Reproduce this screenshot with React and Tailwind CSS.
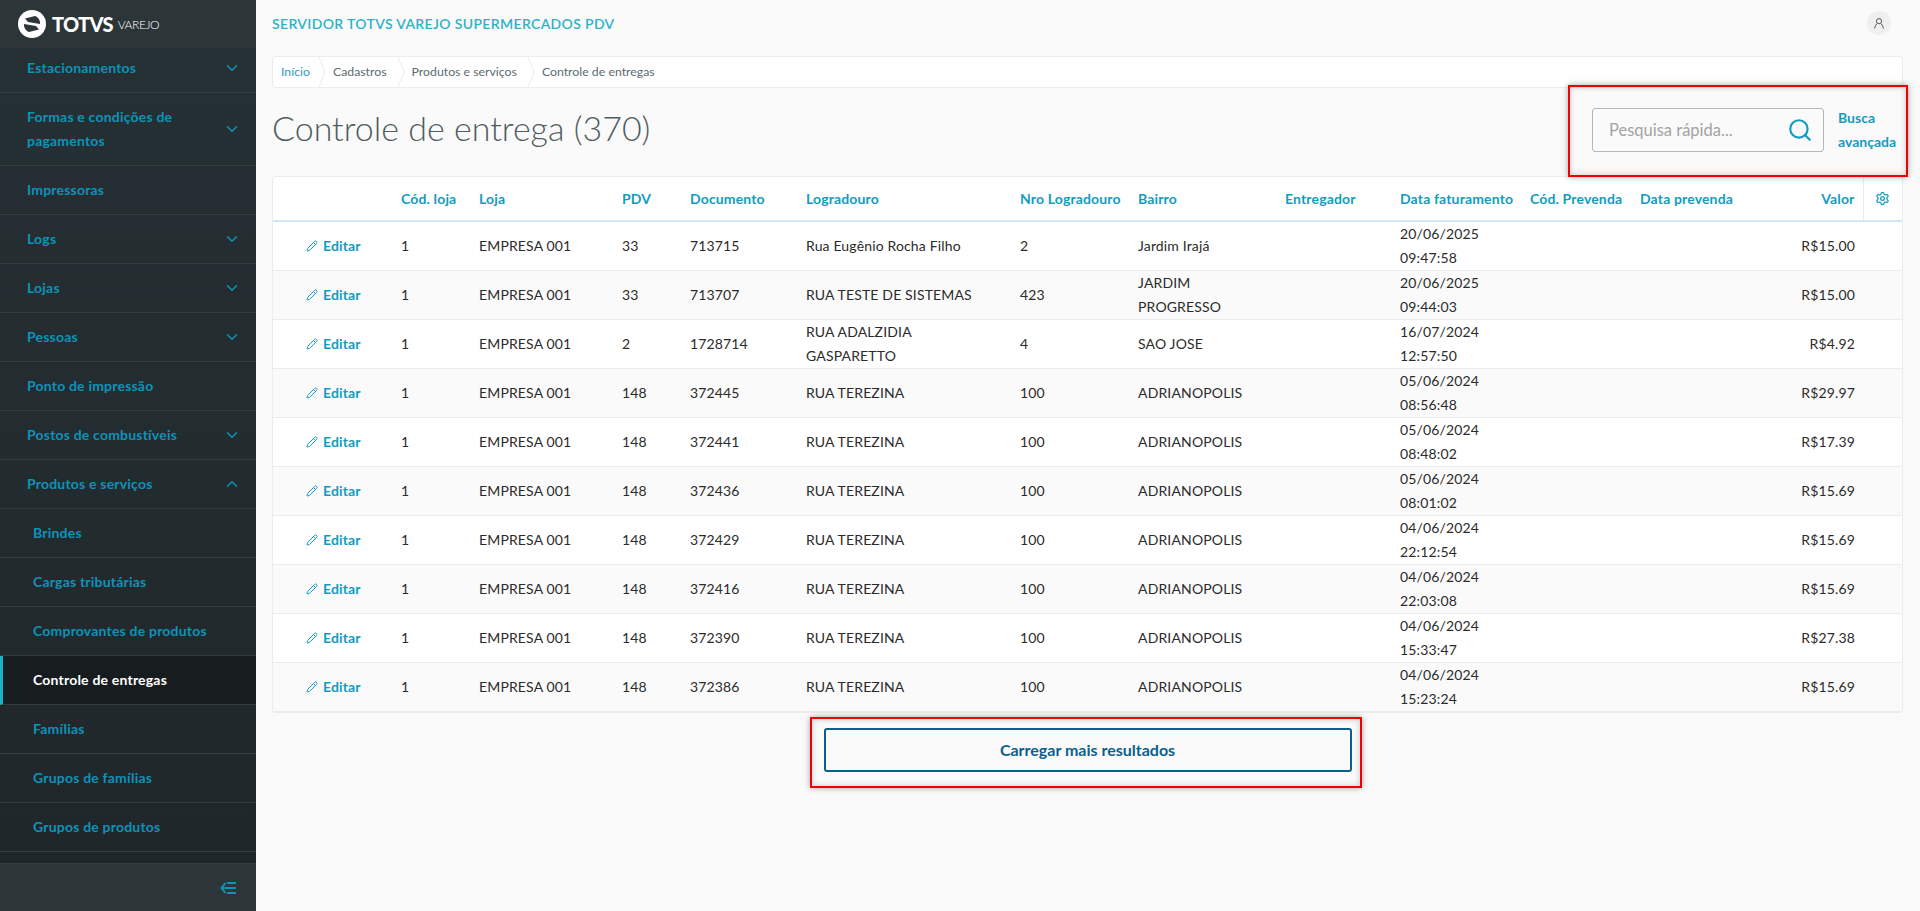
import { ChevronDown, ChevronUp, Pencil, Search, Settings } from 'lucide-react';

const menu = [
  { label: 'Estacionamentos', arrow: 'down' },
  { label: 'Formas e condições de pagamentos', arrow: 'down', tall: true },
  { label: 'Impressoras' },
  { label: 'Logs', arrow: 'down' },
  { label: 'Lojas', arrow: 'down' },
  { label: 'Pessoas', arrow: 'down' },
  { label: 'Ponto de impressão' },
  { label: 'Postos de combustíveis', arrow: 'down' },
  { label: 'Produtos e serviços', arrow: 'up' },
  { label: 'Brindes', sub: true },
  { label: 'Cargas tributárias', sub: true },
  { label: 'Comprovantes de produtos', sub: true },
  { label: 'Controle de entregas', sub: true, active: true },
  { label: 'Famílias', sub: true },
  { label: 'Grupos de famílias', sub: true },
  { label: 'Grupos de produtos', sub: true },
];

const crumbs = ['Início', 'Cadastros', 'Produtos e serviços', 'Controle de entregas'];

const rows = [
  ['33', '713715', 'Rua Eugênio Rocha Filho', '2', 'Jardim Irajá', '20/06/2025', '09:47:58', 'R$15.00'],
  ['33', '713707', 'RUA TESTE DE SISTEMAS', '423', 'JARDIM\nPROGRESSO', '20/06/2025', '09:44:03', 'R$15.00'],
  ['2', '1728714', 'RUA ADALZIDIA\nGASPARETTO', '4', 'SAO JOSE', '16/07/2024', '12:57:50', 'R$4.92'],
  ['148', '372445', 'RUA TEREZINA', '100', 'ADRIANOPOLIS', '05/06/2024', '08:56:48', 'R$29.97'],
  ['148', '372441', 'RUA TEREZINA', '100', 'ADRIANOPOLIS', '05/06/2024', '08:48:02', 'R$17.39'],
  ['148', '372436', 'RUA TEREZINA', '100', 'ADRIANOPOLIS', '05/06/2024', '08:01:02', 'R$15.69'],
  ['148', '372429', 'RUA TEREZINA', '100', 'ADRIANOPOLIS', '04/06/2024', '22:12:54', 'R$15.69'],
  ['148', '372416', 'RUA TEREZINA', '100', 'ADRIANOPOLIS', '04/06/2024', '22:03:08', 'R$15.69'],
  ['148', '372390', 'RUA TEREZINA', '100', 'ADRIANOPOLIS', '04/06/2024', '15:33:47', 'R$27.38'],
  ['148', '372386', 'RUA TEREZINA', '100', 'ADRIANOPOLIS', '04/06/2024', '15:23:24', 'R$15.69'],
];

const heads = ['Cód. loja', 'Loja', 'PDV', 'Documento', 'Logradouro', 'Nro Logradouro', 'Bairro', 'Entregador', 'Data faturamento', 'Cód. Prevenda', 'Data prevenda'];

function Logo() {
  return (
    <div className="flex items-center">
      <svg width="28" height="28" viewBox="0 0 28 28">
        <circle cx="14" cy="14" r="14" fill="#fff" />
        <path d="M7 8.5 L17 6 C19.5 6.8 21.5 9 22 12 L22 14 L10 12 Z" fill="#2c3639" />
        <path d="M21 19.5 L11 22 C8.5 21.2 6.5 19 6 16 L6 14 L18 16 Z" fill="#2c3639" />
      </svg>
      <span className="ml-[6px] text-[20px] font-black tracking-[-0.7px] text-white">TOTVS</span>
      <span className="ml-[5px] mt-[2px] text-[12px] font-light tracking-[-0.4px] text-white">VAREJO</span>
    </div>
  );
}

function MenuItem({ item }) {
  const color = item.active ? 'text-white' : 'text-[#0f92b8]';
  return (
    <div
      className={`flex shrink-0 items-center border-b border-[#323d40] pr-[15px] text-[14px] font-bold leading-[24px] tracking-[0.2px] ${color} ${item.sub ? 'pl-[33px]' : 'pl-[27px]'} ${item.tall ? 'h-[73px]' : 'h-[49px]'} ${item.active ? 'border-l-[3px] !pl-[30px] border-l-[#1fb0c8] bg-[#171c1f]' : ''}`}
    >
      <span className={`flex-1 ${item.tall ? 'pr-[36px]' : ''}`}>{item.label}</span>
      {item.arrow === 'down' && <ChevronDown size={18} strokeWidth={2} />}
      {item.arrow === 'up' && <ChevronUp size={18} strokeWidth={2} />}
    </div>
  );
}

function Sidebar() {
  return (
    <aside className="flex h-[911px] w-[256px] shrink-0 flex-col bg-gradient-to-b from-[#263135] to-[#1f2629]">
      <div className="flex h-[48px] shrink-0 items-center bg-[#2c3639] pl-[18px]">
        <Logo />
      </div>
      <nav className="flex-1 overflow-hidden">
        <div className="-mt-[4px]">
          {menu.map((item) => (
            <MenuItem key={item.label} item={item} />
          ))}
        </div>
      </nav>
      <div className="flex h-[48px] shrink-0 items-center justify-end border-t border-[#323d40] bg-[#2c3639] pr-[20px] text-[#0f92b8]">
        <svg width="16" height="12" viewBox="0 0 16 12" fill="none" stroke="currentColor" strokeWidth="2">
          <path d="M5.5 1 L1.5 6 L5.5 11" />
          <path d="M2 6 H16 M7 1 H16 M7 11 H16" />
        </svg>
      </div>
    </aside>
  );
}

function Breadcrumb() {
  return (
    <div className="flex h-[32px] items-center rounded-[3px] border border-[#ececec] bg-white text-[12.3px] text-[#5c6b70]">
      {crumbs.map((c, i) => (
        <span key={c} className={`relative flex h-full items-center ${i === 0 ? 'pl-[8px] pr-[10px] text-[#2a9bbd]' : 'ml-[2px] pl-[11px] pr-[12px]'}`}>
          {c}
          {i < crumbs.length - 1 && (
            <svg className="absolute right-[-6px] top-0" width="8" height="30" viewBox="0 0 8 30" fill="none" stroke="#ececec">
              <path d="M1 0 L7 15 L1 30" />
            </svg>
          )}
        </span>
      ))}
    </div>
  );
}

function DataTable() {
  return (
    <div className="mt-[4px] rounded-[3px] border border-[#ececec] bg-white">
      <table className="w-full table-fixed border-collapse text-left text-[14px] leading-[24px] tracking-[0.15px] text-[#2b2b2b]">
        <colgroup>
          <col className="w-[120px]" />
          <col className="w-[78px]" />
          <col className="w-[143px]" />
          <col className="w-[68px]" />
          <col className="w-[116px]" />
          <col className="w-[214px]" />
          <col className="w-[118px]" />
          <col className="w-[147px]" />
          <col className="w-[115px]" />
          <col className="w-[130px]" />
          <col className="w-[110px]" />
          <col className="w-[120px]" />
          <col className="w-[111px]" />
          <col className="w-[39px]" />
        </colgroup>
        <thead>
          <tr className="h-[44px] border-b-2 border-[#cfe8f1] text-[#129cc2]">
            <th />
            {heads.map((h) => (
              <th key={h} className="whitespace-nowrap px-[8px] font-bold">{h}</th>
            ))}
            <th className="px-[8px] text-right font-bold">Valor</th>
            <th className="border-l border-[#ececec]">
              <Settings size={15} className="mx-auto" />
            </th>
          </tr>
        </thead>
        <tbody>
          {rows.map((r, i) => (
            <tr key={r[1]} className={`h-[49px] border-b border-[#ececec] ${i % 2 ? 'bg-[#fafafa]' : 'bg-white'}`}>
              <td className="pl-[33px] font-bold text-[#129cc2]">
                <span className="flex items-center gap-[5px]">
                  <Pencil size={12} />
                  Editar
                </span>
              </td>
              <td className="px-[8px]">1</td>
              <td className="whitespace-nowrap px-[8px]">EMPRESA 001</td>
              <td className="px-[8px]">{r[0]}</td>
              <td className="px-[8px]">{r[1]}</td>
              <td className="whitespace-pre-line px-[8px]">{r[2]}</td>
              <td className="px-[8px]">{r[3]}</td>
              <td className="whitespace-pre-line px-[8px]">{r[4]}</td>
              <td className="px-[8px]" />
              <td className="px-[8px]">{r[5]}<br />{r[6]}</td>
              <td className="px-[8px]" />
              <td className="px-[8px]" />
              <td className="px-[8px] text-right">{r[7]}</td>
              <td />
            </tr>
          ))}
        </tbody>
      </table>
    </div>
  );
}

export default function App() {
  return (
    <div className="relative flex h-[911px] w-[1920px] overflow-hidden bg-[#fafafa] font-['Lato','Noto_Sans',sans-serif]">
      <Sidebar />
      <main className="flex-1 pl-[16px] pr-[17px]">
        <header className="flex h-[46px] items-center justify-between">
          <span className="text-[14px] font-semibold tracking-[0.35px] text-[#2bb3c8]">SERVIDOR TOTVS VAREJO SUPERMERCADOS PDV</span>
          <span className="mr-[12px] flex h-[24px] w-[24px] items-center justify-center rounded-full bg-[#efefef]">
            <svg width="10" height="11" viewBox="0 0 10 11" fill="none" stroke="#555" strokeWidth="1">
              <circle cx="5" cy="3.2" r="2.6" />
              <path d="M0.7 10.5 C1 7.5 2.5 6 3.2 5.6 M9.3 10.5 C9 7.5 7.5 6 6.8 5.6" />
            </svg>
          </span>
        </header>
        <div className="mt-[10px]">
          <Breadcrumb />
        </div>
        <div className="flex h-[84px] items-center justify-between">
          <h1 className="mb-[6px] text-[34px] font-light text-[#4f5d60]">Controle de entrega (370)</h1>
          <div className="flex items-center">
            <div className="flex h-[44px] w-[232px] items-center rounded-[3px] border border-[#b4b8b8] pl-[16px] pr-[10px] text-[16.5px] text-[#a3a3a3]">
              <span className="flex-1">Pesquisa rápida...</span>
              <Search size={26} strokeWidth={2} className="text-[#129cc2]" />
            </div>
            <div className="ml-[14px] w-[65px] text-[14px] font-bold leading-[24px] text-[#129cc2]">Busca avançada</div>
          </div>
        </div>
        <DataTable />
        <button className="mx-auto mt-[15px] block h-[44px] w-[528px] rounded-[3px] border-2 border-[#0b5f8f] text-[16px] font-bold text-[#0b5f8f]">
          Carregar mais resultados
        </button>
      </main>
      <div className="pointer-events-none absolute left-[1568px] top-[85px] h-[92px] w-[340px] border-2 border-[#f00000] shadow-[0_0_6px_rgba(0,0,0,0.35),inset_0_0_6px_rgba(0,0,0,0.2)]" />
      <div className="pointer-events-none absolute left-[810px] top-[717px] h-[71px] w-[552px] border-2 border-[#f00000] shadow-[0_0_6px_rgba(0,0,0,0.35),inset_0_0_6px_rgba(0,0,0,0.2)]" />
    </div>
  );
}
